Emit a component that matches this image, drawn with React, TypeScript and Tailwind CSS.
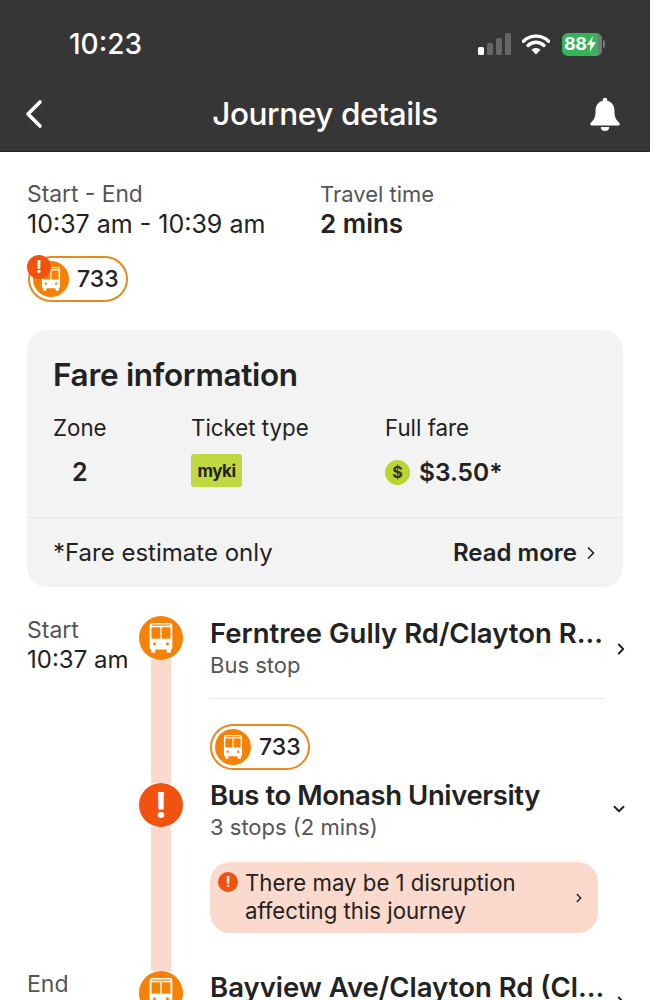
import { ChevronDown, ChevronLeft, ChevronRight } from "lucide-react";

const BusIcon = ({ className }: { className?: string }) => (
  <svg viewBox="0 0 24 24" className={className} fill="none">
    <path d="M5.200 4.600c0-.9.7-1.600 1.600-1.600h10.400c.9 0 1.600.7 1.600 1.600v13.200c0 .6-.5 1.100-1.100 1.100H6.300c-.6 0-1.100-.5-1.100-1.100z" fill="#fff" />
    <rect x="6.300" y="5.600" width="5.300" height="6.800" fill="#f58207" />
    <rect x="12.400" y="5.600" width="5.300" height="6.800" fill="#f58207" />
    <rect x="6.500" y="3.900" width="11" height="0.7" fill="#f58207" />
    <circle cx="8.100" cy="15.500" r="0.9" fill="#f58207" />
    <circle cx="15.900" cy="15.500" r="0.9" fill="#f58207" />
    <rect x="6" y="18.500" width="2.600" height="2.300" rx="0.6" fill="#fff" />
    <rect x="15.400" y="18.500" width="2.600" height="2.300" rx="0.6" fill="#fff" />
  </svg>
);

const BusDot = ({ size }: { size: "sm" | "lg" }) => (
  <div className={size === "lg" ? "flex h-[44px] w-[44px] shrink-0 items-center justify-center rounded-full bg-[#f58207]" : "flex h-[36px] w-[36px] shrink-0 items-center justify-center rounded-full bg-[#f58207]"}>
    <BusIcon className={size === "lg" ? "h-[40px] w-[40px] shrink-0" : "h-[32px] w-[32px] shrink-0"} />
  </div>
);

const AlertDot = ({ className, mark }: { className: string; mark: string }) => (
  <div className={`flex shrink-0 items-center justify-center rounded-full bg-[#f2520f] font-bold text-white ${className}`}>
    <span className={mark}>!</span>
  </div>
);

const RoutePill = ({ alert }: { alert?: boolean }) => (
  <div className="relative flex h-[46px] w-[100px] items-center gap-[8px] rounded-full border-2 border-[#e68a1e] bg-white pl-[3px]">
    <BusDot size="sm" />
    <span className="text-[23px] font-medium text-[#222]">733</span>
    {alert && <AlertDot className="absolute -left-[3px] -top-[3px] h-[24px] w-[24px]" mark="text-[18px] leading-none" />}
  </div>
);

const StatusBar = () => (
  <div className="flex h-[88px] items-center justify-between pl-[69px] pr-[45px]">
    <span className="text-[28px] font-medium text-white">10:23</span>
    <div className="flex items-center">
      <svg viewBox="0 0 34 22" className="h-[22px] w-[34px]">
        <rect x="0" y="14" width="6" height="8" rx="1.500" fill="#fff" />
        <rect x="9" y="10" width="6" height="12" rx="1.500" fill="#666" />
        <rect x="18" y="5" width="6" height="17" rx="1.500" fill="#666" />
        <rect x="27" y="0" width="6" height="22" rx="1.500" fill="#666" />
      </svg>
      <svg viewBox="0 0 28 22" className="ml-[10px] h-[22px] w-[28px]">
        <path d="M1.500 8.200a18 18 0 0 1 25 0M6 12.400a11.600 11.600 0 0 1 16 0" fill="none" stroke="#fff" strokeWidth="3.400" strokeLinecap="round" />
        <path d="M14 21.500l-4.600-4.700a6.500 6.500 0 0 1 9.200 0z" fill="#fff" />
      </svg>
      <div className="relative ml-[12px] flex h-[23px] w-[40px] items-center overflow-hidden rounded-[6px] bg-[#34b558] pl-[2px] text-[18px] font-bold leading-none tracking-[-0.5px] text-white">
        <span>88</span>
        <svg viewBox="0 0 10 18" className="relative z-10 ml-[1px] h-[16px] w-[9px] shrink-0">
          <path d="M6.500 0L0 10h4l-1 8 7-11H5.500z" fill="#fff" />
        </svg>
        <div className="absolute inset-y-0 right-0 w-[4px] bg-[#777]" />
      </div>
      <div className="ml-[1px] h-[8px] w-[2px] rounded-r bg-[#777]" />
    </div>
  </div>
);

const NavBar = () => (
  <div className="grid h-[64px] grid-cols-[1fr_auto_1fr] items-center border-b border-[#222] pb-[11px] pl-[10px] pr-[29px]">
    <ChevronLeft className="h-[48px] w-[48px] text-white" strokeWidth={1.8} />
    <span className="ml-[19px] text-[31.500px] font-medium tracking-[-0.4px] text-white">Journey details</span>
    <svg viewBox="0 0 24 26" className="h-[34px] w-[32px] justify-self-end" fill="#fff">
      <path d="M12 0.500c-1 0-1.700.7-1.700 1.700v.6C6.800 3.600 4.800 6.500 4.800 10.200c0 5-1 7-3.300 9.200-.6.6-.8 1-.8 1.300 0 .6.400 1 1.100 1h20.400c.7 0 1.100-.4 1.100-1 0-.3-.2-.7-.8-1.300-2.300-2.200-3.300-4.200-3.300-9.200 0-3.700-2-6.600-5.500-7.400v-.6c0-1-.7-1.700-1.700-1.700z" />
      <path d="M8.800 23h6.400a3.200 3 0 0 1-6.400 0z" />
    </svg>
  </div>
);

const Summary = () => (
  <div className="px-[27px] pt-[28px]">
    <div className="flex">
      <div className="w-[293px]">
        <div className="text-[22.800px] leading-[28px] text-[#555]">Start - End</div>
        <div className="text-[25px] leading-[32px] text-[#222]">10:37 am - 10:39 am</div>
      </div>
      <div>
        <div className="text-[22px] leading-[28px] text-[#555]">Travel time</div>
        <div className="text-[26px] font-semibold leading-[32px] text-[#222]">2 mins</div>
      </div>
    </div>
    <div className="mt-[16px] pl-[1px]">
      <RoutePill alert />
    </div>
  </div>
);

const FareCard = () => (
  <div className="mx-[27px] mt-[28px] h-[257px] rounded-[20px] bg-[#f3f3f3]">
    <div className="px-[26px] pt-[24px]">
      <div className="text-[31.500px] font-semibold leading-[42px] tracking-[-0.3px] text-[#222]">Fare information</div>
      <div className="mt-[18px] flex text-[22.300px] leading-[28px] text-[#222]">
        <div className="w-[138px]">
          <div>Zone</div>
          <div className="mt-[12px] h-[36px] pl-[19px] text-[25px] font-semibold leading-[36px]">2</div>
        </div>
        <div className="w-[194px]">
          <div>Ticket type</div>
          <div className="mt-[12px] flex h-[33px] w-[51px] items-center justify-center rounded-[3px] bg-[#c2d840] text-[17px] font-bold tracking-[-0.5px]">myki</div>
        </div>
        <div>
          <div>Full fare</div>
          <div className="mt-[12px] flex h-[36px] items-center gap-[9px] text-[24.500px] font-semibold">
            <div className="flex h-[25px] w-[25px] items-center justify-center rounded-full bg-[#b9d531] text-[16px] font-bold text-[#333]">$</div>
            <span>$3.50*</span>
          </div>
        </div>
      </div>
    </div>
    <div className="mt-[27px] flex h-[70px] items-center justify-between border-t border-[#e6e6e6] pl-[26px] pr-[22px] text-[24px] text-[#222]">
      <span>*Fare estimate only</span>
      <span className="flex items-center gap-[4px] font-semibold">
        Read more
        <ChevronRight className="h-[20px] w-[20px]" strokeWidth={2} />
      </span>
    </div>
  </div>
);

const Timeline = () => (
  <div className="mt-[29px] flex pl-[27px]">
    <div className="w-[112px] leading-[29px]">
      <div className="text-[23px] text-[#555]">Start</div>
      <div className="text-[24px] text-[#222]">10:37 am</div>
      <div className="mt-[296px] text-[23px] text-[#555]">End</div>
    </div>
    <div className="flex h-[400px] w-[44px] flex-col items-center">
      <BusDot size="lg" />
      <div className="h-[123px] w-[20px] bg-[#fbd9cc]" />
      <AlertDot className="h-[44px] w-[44px]" mark="text-[36px] leading-none" />
      <div className="h-[144px] w-[20px] bg-[#fbd9cc]" />
      <BusDot size="lg" />
    </div>
    <div className="ml-[27px] w-[420px]">
      <div className="flex items-start">
        <div className="w-[394px] border-b border-[#e6e6e6] pb-[19px]">
          <div className="whitespace-nowrap text-[27.500px] font-semibold leading-[35px] text-[#222]">Ferntree Gully Rd/Clayton R...</div>
          <div className="text-[22px] leading-[28px] text-[#555]">Bus stop</div>
        </div>
        <ChevronRight className="ml-[8px] mt-[24px] h-[18px] w-[18px] text-[#222]" strokeWidth={2.5} />
      </div>
      <div className="mt-[25px]">
        <RoutePill />
      </div>
      <div className="mt-[8px] flex items-start">
        <div className="w-[400px]">
          <div className="text-[27.500px] font-semibold leading-[35px] tracking-[-0.4px] text-[#222]">Bus to Monash University</div>
          <div className="text-[22px] leading-[28px] text-[#555]">3 stops (2 mins)</div>
        </div>
        <ChevronDown className="mt-[22px] h-[18px] w-[18px] text-[#222]" strokeWidth={2.5} />
      </div>
      <div className="mt-[21px] flex h-[71px] w-[388px] items-center rounded-[20px] bg-[#fbd9cc] pl-[8px] pr-[12px]">
        <AlertDot className="mb-[32px] h-[20px] w-[20px]" mark="text-[14px] leading-none" />
        <div className="ml-[7px] flex-1 pb-[2px] text-[22.200px] leading-[28px] text-[#222]">
          There may be 1 disruption
          <br />
          affecting this journey
        </div>
        <ChevronRight className="h-[14px] w-[14px] text-[#222]" strokeWidth={2.5} />
      </div>
      <div className="mt-[36px] flex items-start">
        <div className="w-[394px] whitespace-nowrap text-[27.500px] font-semibold leading-[36px] text-[#222]">Bayview Ave/Clayton Rd (Cl...</div>
        <ChevronRight className="ml-[8px] mt-[24px] h-[18px] w-[18px] text-[#222]" strokeWidth={2.5} />
      </div>
    </div>
  </div>
);

export default function App() {
  return (
    <div className="h-[1000px] w-[650px] overflow-hidden bg-white font-['Inter',sans-serif]">
      <div className="bg-[#363636]">
        <StatusBar />
        <NavBar />
      </div>
      <Summary />
      <FareCard />
      <Timeline />
    </div>
  );
}
